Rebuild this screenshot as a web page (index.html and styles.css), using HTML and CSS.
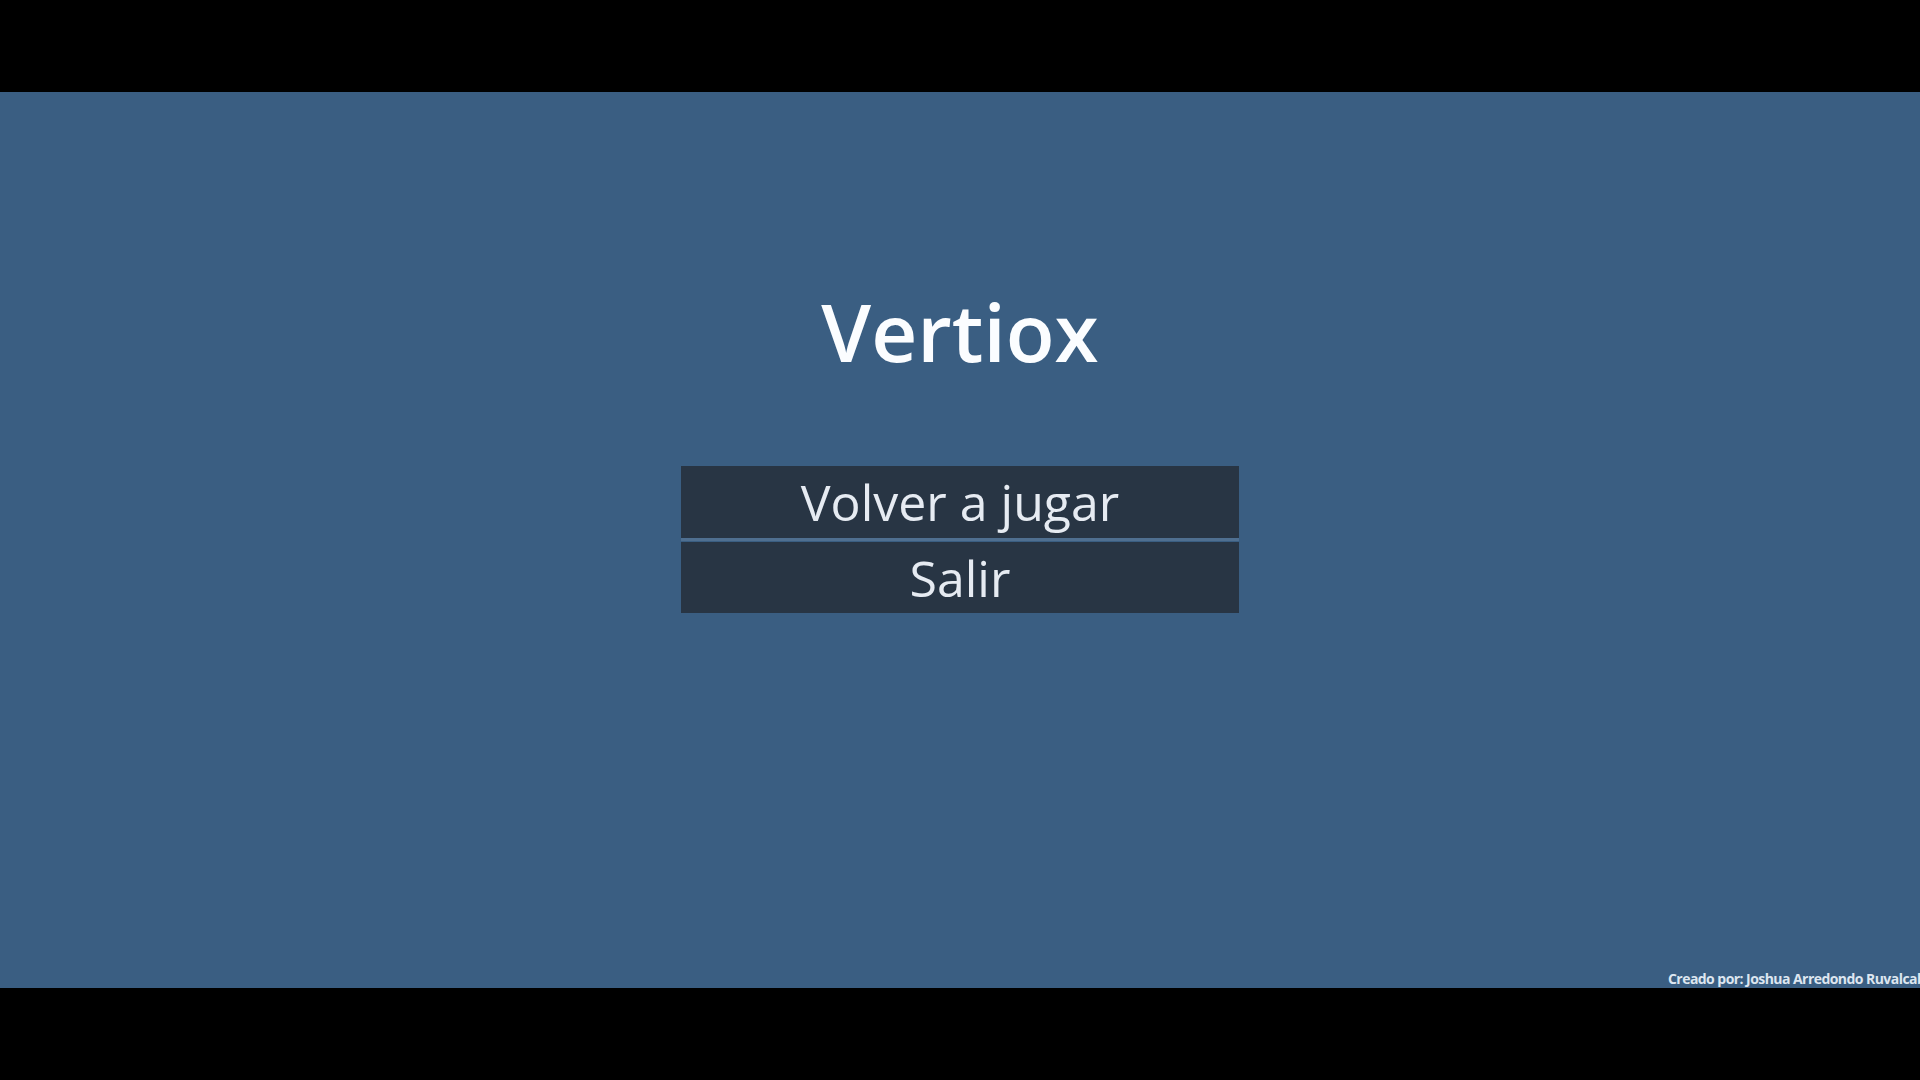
FILE: index.html
```html
<!DOCTYPE html>
<html lang="es">
<head>
<meta charset="utf-8">
<title>Vertiox</title>
<link rel="stylesheet" href="styles.css">
</head>
<body>
<div class="letterbox"></div>
<main class="screen">
  <h1 class="title">Vertiox</h1>
  <div class="menu">
    <button class="menu-btn menu-btn-first">Volver a jugar</button>
    <button class="menu-btn">Salir</button>
  </div>
  <div class="footer">
    <span class="credit">Creado por: Joshua Arredondo Ruvalcaba</span>
  </div>
</main>
<div class="letterbox"></div>
</body>
</html>
```
FILE: styles.css
```css
html, body {
  margin: 0;
  padding: 0;
  width: 1920px;
  height: 1080px;
  overflow: hidden;
  background: #000;
  font-family: "Open Sans", "Noto Sans", sans-serif;
}
body {
  display: flex;
  flex-direction: column;
}
.letterbox {
  height: 92px;
  background: #000;
  flex: none;
}
.screen {
  height: 896px;
  flex: none;
  background: #3a5e82;
  display: flex;
  flex-direction: column;
  align-items: center;
  overflow: hidden;
}
.title {
  margin: 191px 0 0;
  font-size: 80px;
  line-height: 1.2;
  font-weight: 600;
  color: #fbfdff;
}
.menu {
  margin-top: 87px;
  display: flex;
  flex-direction: column;
  width: 558px;
}
.menu-btn {
  height: 72px;
  padding: 0;
  border: none;
  background: #283544;
  color: #e6ebf2;
  font-family: "Open Sans", "Noto Sans", sans-serif;
  font-size: 50px;
  line-height: 72px;
  font-weight: 400;
  text-align: center;
}
.menu-btn-first {
  border-bottom: 3px solid #4f6f90;
  margin-bottom: 1px;
  height: 75px;
}
.menu-btn + .menu-btn {
  height: 71px;
}
.footer {
  margin-top: auto;
  align-self: stretch;
  display: flex;
  justify-content: flex-end;
}
.credit {
  width: 252px;
  white-space: nowrap;
  font-size: 14px;
  letter-spacing: -0.55px;
  line-height: 18px;
  font-weight: 700;
  color: #dde6f0;
}
```
